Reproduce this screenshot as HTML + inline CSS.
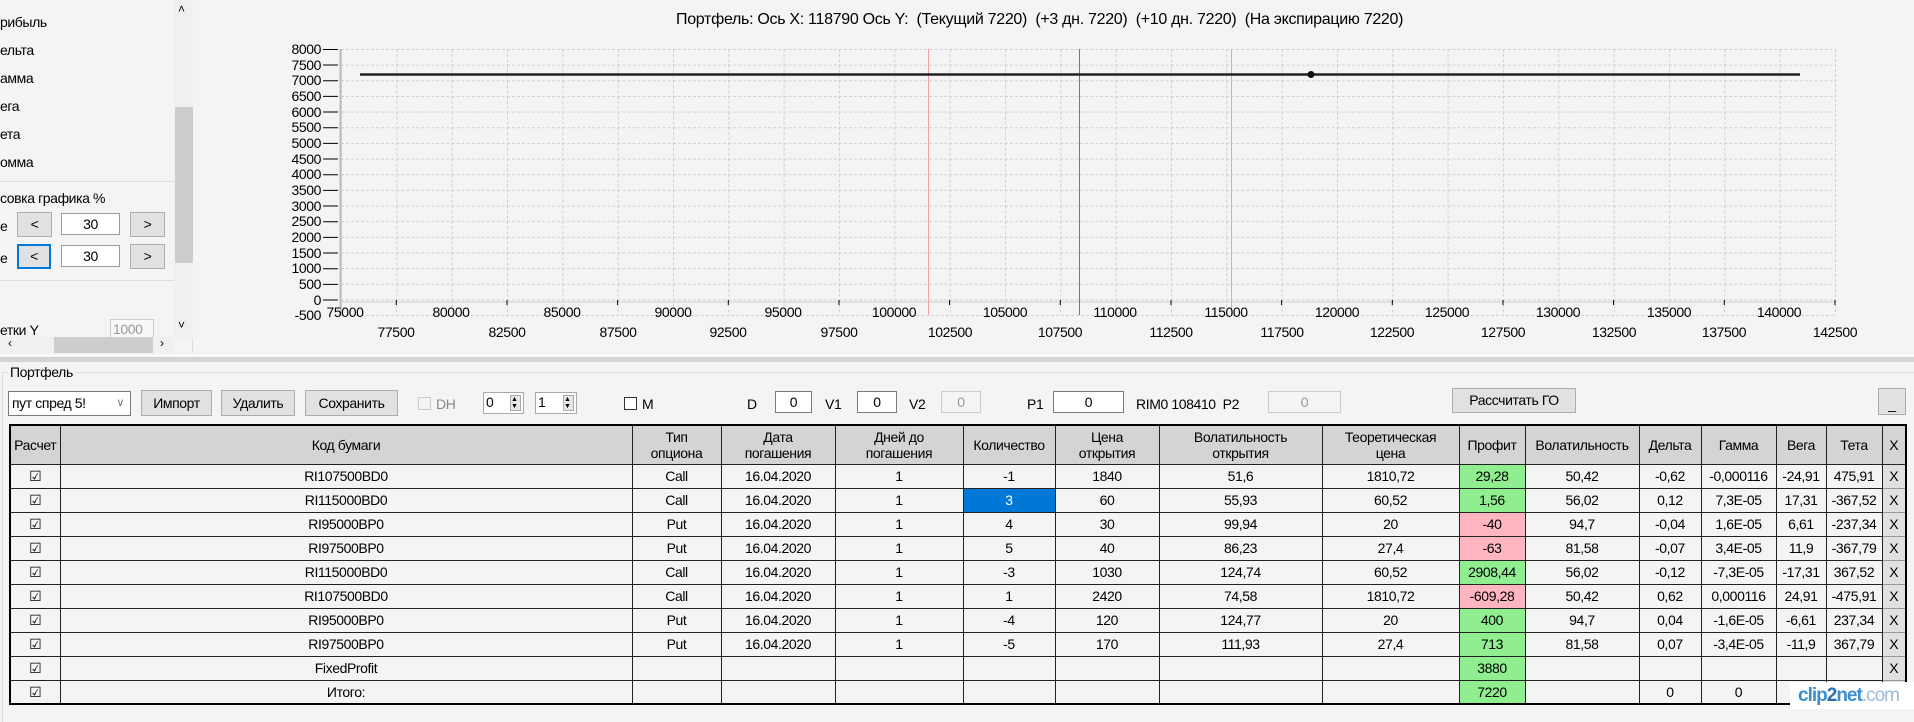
<!DOCTYPE html>
<html><head><meta charset="utf-8"><style>
*{box-sizing:border-box}
body{margin:0;width:1914px;height:709px;background:#f4f4f4;font-family:"Liberation Sans",sans-serif;font-size:14px;color:#000;position:relative;overflow:hidden;letter-spacing:-0.4px}
.a{position:absolute;white-space:nowrap}
.btn{position:absolute;background:#e1e1e1;border:1px solid #adadad;text-align:center}
.box{position:absolute;background:#fff;border:1px solid #7a7a7a;text-align:center}
table{position:absolute;left:9px;top:424px;border-collapse:collapse;table-layout:fixed;width:1896px;border:2px solid #000}
td,th{border:1px solid #222;height:24px;padding:0;text-align:center;font-weight:normal;overflow:hidden;white-space:nowrap;line-height:16px;font-size:14px}
th{background:#d4d4d4;height:39px}
td{background:#f4f4f4}
.g{background:#90ee90}.p{background:#ffb6c1}
.x{background:#e1e1e1;border:1px solid #999}
.sel{background:#0078d7;color:#fff}
</style></head><body>
<div class="a" style="left:0;top:0;width:193px;height:353px;background:#f4f4f4;border-right:1px solid #ddd"></div>
<div class="a" style="left:0;top:14px">рибыль</div>
<div class="a" style="left:0;top:42px">ельта</div>
<div class="a" style="left:0;top:70px">амма</div>
<div class="a" style="left:0;top:98px">ега</div>
<div class="a" style="left:0;top:126px">ета</div>
<div class="a" style="left:0;top:154px">омма</div>
<div class="a" style="left:0;top:181px;width:174px;border-top:1px solid #ddd"></div>
<div class="a" style="left:0;top:190px">совка графика %</div>
<div class="a" style="left:0;top:218px">е</div>
<div class="btn" style="left:17px;top:212px;width:35px;height:25px;line-height:23px">&lt;</div>
<div class="box" style="left:61px;top:213px;width:59px;height:22px;line-height:20px;border-color:#999">30</div>
<div class="btn" style="left:130px;top:212px;width:35px;height:25px;line-height:23px">&gt;</div>
<div class="a" style="left:0;top:250px">е</div>
<div class="btn" style="left:17px;top:244px;width:34px;height:25px;line-height:21px;border:2px solid #0078d7">&lt;</div>
<div class="box" style="left:61px;top:245px;width:59px;height:22px;line-height:20px;border-color:#999">30</div>
<div class="btn" style="left:130px;top:244px;width:35px;height:25px;line-height:23px">&gt;</div>
<div class="a" style="left:0;top:280px;width:174px;border-top:1px solid #ddd"></div>
<div class="a" style="left:0;top:322px">етки Y</div>
<div class="box" style="left:110px;top:319px;width:44px;height:20px;line-height:18px;color:#999;border-color:#ccc;background:#f8f8f8;text-align:left;padding-left:2px">1000</div>
<div class="a" style="left:174px;top:0;width:19px;height:338px;background:#f0f0f0"></div>
<div class="a" style="left:175px;top:107px;width:18px;height:156px;background:#cdcdcd"></div>
<div class="a" style="left:178px;top:2px;font-size:12px">&#x2C4;</div>
<div class="a" style="left:178px;top:318px;font-size:12px">&#x2C5;</div>
<div class="a" style="left:0;top:337px;width:174px;height:16px;background:#f0f0f0"></div>
<div class="a" style="left:54px;top:337px;width:99px;height:16px;background:#cdcdcd"></div>
<div class="a" style="left:8px;top:336px;font-size:12px">&lsaquo;</div>
<div class="a" style="left:160px;top:336px;font-size:12px">&rsaquo;</div>

<div class="a" style="left:676px;top:11px;font-size:16px;letter-spacing:-0.3px">Портфель: Ось X: 118790 Ось Y:&nbsp; (Текущий 7220)&nbsp; (+3 дн. 7220)&nbsp; (+10 дн. 7220)&nbsp; (На экспирацию 7220)</div>
<svg class="a" style="left:0;top:0" width="1914" height="356">
<defs><pattern id="gr" x="341" y="49" width="55.33" height="15.65" patternUnits="userSpaceOnUse">
<path d="M0 0.5H55.33M0.5 0V15.65" stroke="#d0d0d0" stroke-width="1" stroke-dasharray="3,2" fill="none"/></pattern></defs>
<rect x="341" y="49" width="1494" height="266" fill="url(#gr)"/>
<line x1="1835.5" y1="49" x2="1835.5" y2="315" stroke="#d0d0d0" stroke-dasharray="3,2"/>
<line x1="341" y1="315.5" x2="1835" y2="315.5" stroke="#d0d0d0" stroke-dasharray="3,2"/>
<line x1="340.5" y1="49" x2="340.5" y2="315" stroke="#bbb" stroke-width="2"/>
<line x1="341" y1="302" x2="1835" y2="302" stroke="#ccc"/>
<line x1="928.5" y1="49" x2="928.5" y2="315" stroke="#f4a0a8"/>
<line x1="1231.5" y1="49" x2="1231.5" y2="315" stroke="#f4a0a8"/>
<line x1="1079.5" y1="49" x2="1079.5" y2="315" stroke="#777"/>
<line x1="360" y1="74.5" x2="1800" y2="74.5" stroke="#222" stroke-width="2.5"/>
<circle cx="1311" cy="74.5" r="3.5" fill="#111"/>
<g stroke="#000"><path d="M323 49.5h15M323 65h15M323 80.7h15M323 96.4h15M323 112h15M323 127.7h15M323 143.4h15M323 159h15M323 174.7h15M323 190.4h15M323 206h15M323 221.7h15M323 237.4h15M323 253h15M323 268.7h15M323 284.4h15M323 300h15"/>
<path d="M396.3 300v5M507 300v5M617.6 300v5M728.3 300v5M839 300v5M949.6 300v5M1060.3 300v5M1171 300v5M1281.6 300v5M1392.3 300v5M1503 300v5M1613.6 300v5M1724.3 300v5M1835 300v5"/></g>
<g font-family="Liberation Sans" font-size="14" text-anchor="end" letter-spacing="-0.4">
<text x="321" y="54">8000</text><text x="321" y="70">7500</text><text x="321" y="85">7000</text><text x="321" y="101">6500</text><text x="321" y="117">6000</text><text x="321" y="132">5500</text><text x="321" y="148">5000</text><text x="321" y="164">4500</text><text x="321" y="179">4000</text><text x="321" y="195">3500</text><text x="321" y="211">3000</text><text x="321" y="226">2500</text><text x="321" y="242">2000</text><text x="321" y="258">1500</text><text x="321" y="273">1000</text><text x="321" y="289">500</text><text x="321" y="305">0</text><text x="321" y="320">-500</text></g>
<g font-family="Liberation Sans" font-size="14" text-anchor="middle" letter-spacing="-0.4">
<text x="345" y="317">75000</text><text x="451" y="317">80000</text><text x="562" y="317">85000</text><text x="673" y="317">90000</text><text x="783" y="317">95000</text><text x="894" y="317">100000</text><text x="1005" y="317">105000</text><text x="1115" y="317">110000</text><text x="1226" y="317">115000</text><text x="1337" y="317">120000</text><text x="1447" y="317">125000</text><text x="1558" y="317">130000</text><text x="1669" y="317">135000</text><text x="1779" y="317">140000</text>
<text x="396" y="337">77500</text><text x="507" y="337">82500</text><text x="618" y="337">87500</text><text x="728" y="337">92500</text><text x="839" y="337">97500</text><text x="950" y="337">102500</text><text x="1060" y="337">107500</text><text x="1171" y="337">112500</text><text x="1282" y="337">117500</text><text x="1392" y="337">122500</text><text x="1503" y="337">127500</text><text x="1614" y="337">132500</text><text x="1724" y="337">137500</text><text x="1835" y="337">142500</text></g>
</svg>

<div class="a" style="left:0;top:355px;width:1914px;height:1px;background:#fff"></div>
<div class="a" style="left:0;top:357px;width:1914px;height:5px;background:#d4d4d4"></div>
<div class="a" style="left:2px;top:372px;width:1912px;height:350px;border-top:1px solid #dcdcdc;border-left:1px solid #dcdcdc"></div>
<div class="a" style="left:8px;top:364px;background:#f4f4f4;padding:0 2px">Портфель</div>

<div class="box" style="left:8px;top:391px;width:123px;height:25px;line-height:23px;text-align:left;padding-left:3px">пут спред 5!<span style="position:absolute;right:6px;color:#777;font-size:11px">&#x2228;</span></div>
<div class="btn" style="left:141px;top:390px;width:71px;height:26px;line-height:24px">Импорт</div>
<div class="btn" style="left:221px;top:390px;width:74px;height:26px;line-height:24px">Удалить</div>
<div class="btn" style="left:305px;top:390px;width:93px;height:26px;line-height:24px">Сохранить</div>
<div class="a" style="left:418px;top:397px;width:13px;height:13px;border:1px solid #ccc;background:#f4f4f4"></div>
<div class="a" style="left:436px;top:396px;color:#888">DH</div>
<div class="box" style="left:483px;top:392px;width:41px;height:22px;border-color:#aaa;text-align:left;padding-left:2px;line-height:18px">0<span style="position:absolute;right:2px;top:2px;width:11px;height:16px;background:#e6e6e6;border:1px solid #aaa;font-size:7px;line-height:7px">▲<br>▼</span></div>
<div class="box" style="left:535px;top:392px;width:42px;height:22px;border-color:#aaa;text-align:left;padding-left:2px;line-height:18px">1<span style="position:absolute;right:2px;top:2px;width:11px;height:16px;background:#e6e6e6;border:1px solid #aaa;font-size:7px;line-height:7px">▲<br>▼</span></div>
<div class="a" style="left:624px;top:397px;width:13px;height:13px;border:1px solid #333;background:#fff"></div>
<div class="a" style="left:642px;top:396px">M</div>
<div class="a" style="left:747px;top:396px">D</div>
<div class="box" style="left:775px;top:391px;width:37px;height:22px;line-height:20px">0</div>
<div class="a" style="left:825px;top:396px">V1</div>
<div class="box" style="left:857px;top:391px;width:40px;height:22px;line-height:20px">0</div>
<div class="a" style="left:909px;top:396px">V2</div>
<div class="box" style="left:941px;top:391px;width:40px;height:22px;line-height:20px;color:#999;border-color:#ccc;background:#f4f4f4">0</div>
<div class="a" style="left:1027px;top:396px">P1</div>
<div class="box" style="left:1053px;top:391px;width:71px;height:22px;line-height:20px">0</div>
<div class="a" style="left:1136px;top:396px">RIM0 108410&nbsp; P2</div>
<div class="box" style="left:1268px;top:391px;width:73px;height:22px;line-height:20px;color:#999;border-color:#ccc;background:#f4f4f4">0</div>
<div class="btn" style="left:1452px;top:388px;width:124px;height:25px;line-height:23px">Рассчитать ГО</div>
<div class="btn" style="left:1878px;top:388px;width:28px;height:27px;line-height:30px">_</div>

<table>
<colgroup><col style="width:50px"><col style="width:572px"><col style="width:89px"><col style="width:114px"><col style="width:128px"><col style="width:92px"><col style="width:104px"><col style="width:163px"><col style="width:137px"><col style="width:66px"><col style="width:114px"><col style="width:62px"><col style="width:75px"><col style="width:50px"><col style="width:56px"><col style="width:24px"></colgroup>
<tr><th>Расчет</th><th>Код бумаги</th><th>Тип<br>опциона</th><th>Дата<br>погашения</th><th>Дней до<br>погашения</th><th>Количество</th><th>Цена<br>открытия</th><th>Волатильность<br>открытия</th><th>Теоретическая<br>цена</th><th>Профит</th><th>Волатильность</th><th>Дельта</th><th>Гамма</th><th>Вега</th><th>Тета</th><th>X</th></tr>
<tr><td>☑</td><td>RI107500BD0</td><td>Call</td><td>16.04.2020</td><td>1</td><td>-1</td><td>1840</td><td>51,6</td><td>1810,72</td><td class="g">29,28</td><td>50,42</td><td>-0,62</td><td>-0,000116</td><td>-24,91</td><td>475,91</td><td class="x">X</td></tr>
<tr><td>☑</td><td>RI115000BD0</td><td>Call</td><td>16.04.2020</td><td>1</td><td class="sel">3</td><td>60</td><td>55,93</td><td>60,52</td><td class="g">1,56</td><td>56,02</td><td>0,12</td><td>7,3E-05</td><td>17,31</td><td>-367,52</td><td class="x">X</td></tr>
<tr><td>☑</td><td>RI95000BP0</td><td>Put</td><td>16.04.2020</td><td>1</td><td>4</td><td>30</td><td>99,94</td><td>20</td><td class="p">-40</td><td>94,7</td><td>-0,04</td><td>1,6E-05</td><td>6,61</td><td>-237,34</td><td class="x">X</td></tr>
<tr><td>☑</td><td>RI97500BP0</td><td>Put</td><td>16.04.2020</td><td>1</td><td>5</td><td>40</td><td>86,23</td><td>27,4</td><td class="p">-63</td><td>81,58</td><td>-0,07</td><td>3,4E-05</td><td>11,9</td><td>-367,79</td><td class="x">X</td></tr>
<tr><td>☑</td><td>RI115000BD0</td><td>Call</td><td>16.04.2020</td><td>1</td><td>-3</td><td>1030</td><td>124,74</td><td>60,52</td><td class="g">2908,44</td><td>56,02</td><td>-0,12</td><td>-7,3E-05</td><td>-17,31</td><td>367,52</td><td class="x">X</td></tr>
<tr><td>☑</td><td>RI107500BD0</td><td>Call</td><td>16.04.2020</td><td>1</td><td>1</td><td>2420</td><td>74,58</td><td>1810,72</td><td class="p">-609,28</td><td>50,42</td><td>0,62</td><td>0,000116</td><td>24,91</td><td>-475,91</td><td class="x">X</td></tr>
<tr><td>☑</td><td>RI95000BP0</td><td>Put</td><td>16.04.2020</td><td>1</td><td>-4</td><td>120</td><td>124,77</td><td>20</td><td class="g">400</td><td>94,7</td><td>0,04</td><td>-1,6E-05</td><td>-6,61</td><td>237,34</td><td class="x">X</td></tr>
<tr><td>☑</td><td>RI97500BP0</td><td>Put</td><td>16.04.2020</td><td>1</td><td>-5</td><td>170</td><td>111,93</td><td>27,4</td><td class="g">713</td><td>81,58</td><td>0,07</td><td>-3,4E-05</td><td>-11,9</td><td>367,79</td><td class="x">X</td></tr>
<tr><td>☑</td><td>FixedProfit</td><td></td><td></td><td></td><td></td><td></td><td></td><td></td><td class="g">3880</td><td></td><td></td><td></td><td></td><td></td><td class="x">X</td></tr>
<tr><td>☑</td><td>Итого:</td><td></td><td></td><td></td><td></td><td></td><td></td><td></td><td class="g">7220</td><td></td><td>0</td><td>0</td><td></td><td></td><td class="x"></td></tr>
</table>
<div class="a" style="left:1790px;top:682px;width:124px;height:27px;background:#fff;font-size:19px;line-height:27px;padding-left:8px;letter-spacing:-1px;color:#3a8fd0;font-weight:bold">clip<span style="color:#2a6fb0">2</span>net<span style="color:#9bbbd8;font-weight:normal">.com</span></div>
</body></html>
